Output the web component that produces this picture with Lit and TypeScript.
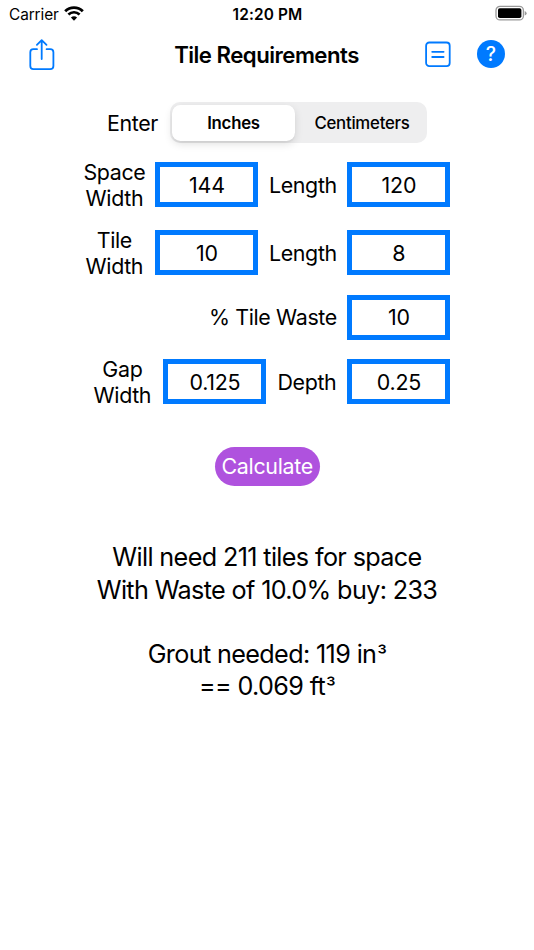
import { LitElement, html, css } from "lit";
import { customElement, property, state } from "lit/decorators.js";

@customElement("status-bar")
class StatusBar extends LitElement {
  static styles = css`
    :host {
      display: grid;
      grid-template-columns: 1fr auto 1fr;
      align-items: center;
      height: 28px;
      padding: 0 8px 0 9px;
      font-size: 15.4px;
    }
    .left {
      display: flex;
      align-items: center;
      gap: 5px;
      letter-spacing: -0.1px;
    }
    .left svg {
      margin-top: -2px;
    }
    .time {
      font-weight: 600;
      letter-spacing: 0.15px;
    }
    .right {
      display: flex;
      justify-content: flex-end;
      margin-right: -1px;
    }
    .right svg {
      margin-top: -2px;
    }
    svg {
      display: block;
    }
  `;
  render() {
    return html`
      <div class="left">
        <span>Carrier</span>
        <svg width="20" height="15" viewBox="0 0 20 15" fill="none" stroke="#000">
          <path d="M1.2 5.2 A12.6 12.6 0 0 1 18.8 5.2" stroke-width="2.9" />
          <path d="M4.4 8.5 A8 8 0 0 1 15.6 8.5" stroke-width="2.6" />
          <path d="M10 14.8 L6.9 11.6 A4.5 4.5 0 0 1 13.1 11.6 Z" fill="#000" stroke="none" />
        </svg>
      </div>
      <div class="time">12:20 PM</div>
      <div class="right">
        <svg width="33" height="16" viewBox="0 0 33 16">
          <rect x="2" y="1.3" width="27.4" height="13.6" rx="4" fill="none" stroke="#999" stroke-width="1.3" />
          <rect x="4" y="3.3" width="23.4" height="9.8" rx="1.8" fill="#000" />
          <path d="M30.7 5.9 Q32.6 6.5 32.6 8.2 Q32.6 9.9 30.7 10.5 Z" fill="#999" />
        </svg>
      </div>
    `;
  }
}

@customElement("nav-bar")
class NavBar extends LitElement {
  static styles = css`
    :host {
      display: grid;
      grid-template-columns: 1fr auto 1fr;
      align-items: center;
      height: 53px;
      padding: 0 29px 0 28px;
      font-size: 22.2px;
      font-weight: 600;
    }
    .title {
      letter-spacing: -0.52px;
    }
    .actions {
      display: flex;
      justify-content: flex-end;
      align-items: center;
      gap: 26px;
      margin-top: -1px;
    }
    svg {
      display: block;
    }
    .help {
      display: flex;
      align-items: center;
      justify-content: center;
      width: 28px;
      height: 28px;
      border-radius: 50%;
      background: #007aff;
      color: #fff;
      font-size: 19.5px;
      font-weight: 500;
    }
  `;
  render() {
    return html`
      <div>
        <svg width="28" height="34" viewBox="0 0 28 34" fill="none" stroke="#007aff" stroke-width="1.8" stroke-linecap="round" stroke-linejoin="round">
          <path d="M9 11.2 H5.4 Q2.3 11.2 2.3 14.3 V28 Q2.3 31.2 5.4 31.2 H22.2 Q25.4 31.2 25.4 28 V14.3 Q25.4 11.2 22.2 11.2 H18.6" />
          <path d="M13.7 21 V2.4 M8.9 6.9 L13.7 2.1 L18.5 6.9" />
        </svg>
      </div>
      <div class="title">Tile Requirements</div>
      <div class="actions">
        <svg width="26" height="26" viewBox="0 0 26 26" fill="none" stroke="#007aff" stroke-width="1.8" stroke-linecap="round">
          <rect x="1.1" y="1.5" width="23.6" height="23.6" rx="3.2" />
          <path d="M7.2 10.8 H18.6 M7.2 16 H18.6" />
        </svg>
        <div class="help">?</div>
      </div>
    `;
  }
}

@customElement("unit-picker")
class UnitPicker extends LitElement {
  @property() selected = "Inches";
  static styles = css`
    :host {
      display: grid;
      grid-template-columns: 123px 1fr;
      box-sizing: border-box;
      width: 257px;
      height: 41px;
      padding: 3px 0 2px 2px;
      border-radius: 10px;
      background: #eeeeef;
      font-size: 16.8px;
      font-weight: 500;
      letter-spacing: -0.25px;
    }
    .segment {
      display: flex;
      align-items: center;
      justify-content: center;
      padding-left: 2px;
      border-radius: 8.5px;
    }
    .active {
      padding: 0;
      background: #fff;
      font-weight: 600;
      box-shadow: 0 3px 8px rgba(0, 0, 0, 0.12), 0 2px 1px rgba(0, 0, 0, 0.04);
    }
  `;
  render() {
    return ["Inches", "Centimeters"].map(
      (unit) => html`<div class="segment ${unit === this.selected ? "active" : ""}">${unit}</div>`
    );
  }
}

@customElement("app-root")
class AppRoot extends LitElement {
  @state() unit = "Inches";

  static styles = css`
    :host {
      display: block;
      height: 950px;
      overflow: hidden;
      background: #fff;
      color: #000;
      font-family: Inter, "Liberation Sans", sans-serif;
    }
    .form {
      display: flex;
      flex-direction: column;
      width: 366.4px;
      margin: 21px 0 0 84px;
      font-size: 21.4px;
      line-height: 26px;
    }
    .row {
      display: flex;
      align-items: center;
      justify-content: flex-end;
      gap: 11px;
      white-space: nowrap;
    }
    .units {
      justify-content: flex-start;
      padding-left: 22px;
      margin-bottom: 15.5px;
    }
    .dimensions {
      height: 52px;
    }
    .tile {
      margin-top: 16.4px;
    }
    .waste {
      margin-top: 16px;
      height: 45px;
    }
    .gap {
      margin-top: 16px;
    }
    .label {
      display: flex;
      justify-content: center;
      text-align: center;
      letter-spacing: -0.35px;
    }
    .enter {
      width: 53px;
    }
    .side {
      width: 60px;
    }
    .length {
      width: 67px;
    }
    .depth {
      width: 59px;
    }
    .percent {
      width: 127px;
    }
    .field {
      box-sizing: border-box;
      display: flex;
      align-items: center;
      justify-content: center;
      width: 103px;
      height: 45px;
      border: 5px solid #007aff;
      letter-spacing: -0.2px;
    }
    .calculate {
      display: flex;
      align-items: center;
      justify-content: center;
      width: 104.5px;
      height: 39px;
      margin: 39px auto 0 215px;
      border-radius: 20px;
      background: #af52de;
      color: #fff;
      font-size: 21.4px;
      letter-spacing: -0.3px;
    }
    .results {
      margin-top: 55.6px;
      text-align: center;
      font-size: 25.2px;
      line-height: 32.2px;
      letter-spacing: -0.64px;
    }
    .cubed {
      margin-left: 1px;
      font-size: 0.86em;
      line-height: 0;
    }
  `;

  render() {
    return html`
      <status-bar></status-bar>
      <nav-bar></nav-bar>
      <div class="form">
        <div class="row units">
          <div class="label enter">Enter</div>
          <unit-picker .selected=${this.unit}></unit-picker>
        </div>
        <div class="row dimensions">
          <div class="label side">Space<br />Width</div>
          <div class="field">144</div>
          <div class="label length">Length</div>
          <div class="field">120</div>
        </div>
        <div class="row dimensions tile">
          <div class="label side">Tile<br />Width</div>
          <div class="field">10</div>
          <div class="label length">Length</div>
          <div class="field">8</div>
        </div>
        <div class="row waste">
          <div class="label percent">% Tile Waste</div>
          <div class="field">10</div>
        </div>
        <div class="row dimensions gap">
          <div class="label side">Gap<br />Width</div>
          <div class="field">0.125</div>
          <div class="label depth">Depth</div>
          <div class="field">0.25</div>
        </div>
      </div>
      <div class="calculate">Calculate</div>
      <div class="results">Will need 211 tiles for space<br />With Waste of 10.0% buy: 233<br /><br />Grout needed: 119 in<span class="cubed">³</span><br />== 0.069 ft<span class="cubed">³</span></div>
    `;
  }
}
